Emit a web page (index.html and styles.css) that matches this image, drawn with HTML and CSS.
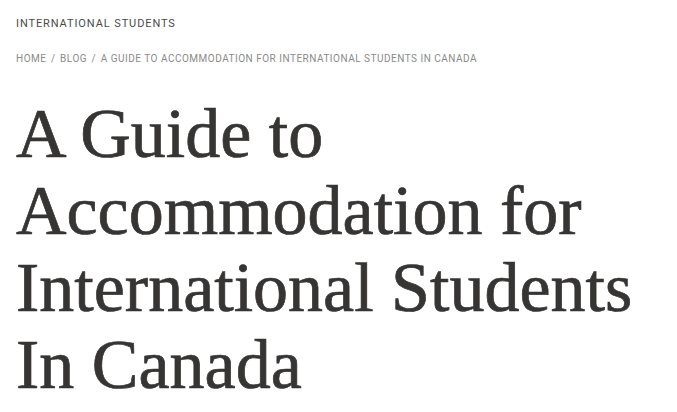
FILE: index.html
```html
<!DOCTYPE html>
<html lang="en">
<head>
<meta charset="utf-8">
<link rel="stylesheet" href="styles.css">
</head>
<body>
<main class="page">
  <div class="category">International Students</div>
  <nav class="crumbs">
    <a href="#">Home</a><span class="sep">/</span><a href="#">Blog</a><span class="sep">/</span><span>A Guide to Accommodation for International Students In Canada</span>
  </nav>
  <h1 class="title">A Guide to<br>Accommodation for<br>International Students<br>In Canada</h1>
</main>
</body>
</html>
```
FILE: styles.css
```css
html, body {
  margin: 0;
  padding: 0;
  background: #fff;
}
.page {
  padding: 16px 0 0 16px;
  font-family: Roboto, "Liberation Sans", sans-serif;
}
.category {
  font-size: 11px;
  line-height: 16px;
  letter-spacing: 0.9px;
  text-transform: uppercase;
  color: #4a4a4a;
}
.crumbs {
  margin-top: 20px;
  font-size: 10px;
  line-height: 14px;
  letter-spacing: 0.5px;
  text-transform: uppercase;
  color: #8a8a8a;
}
.crumbs a {
  color: inherit;
  text-decoration: none;
}
.crumbs .sep {
  margin: 0 4.5px;
}
.title {
  margin: 29px 0 0;
  font-family: "Liberation Serif", serif;
  font-weight: normal;
  font-size: 70px;
  line-height: 77px;
  color: #363534;
  -webkit-text-stroke: 0.7px #363534;
  letter-spacing: 0;
}
```
